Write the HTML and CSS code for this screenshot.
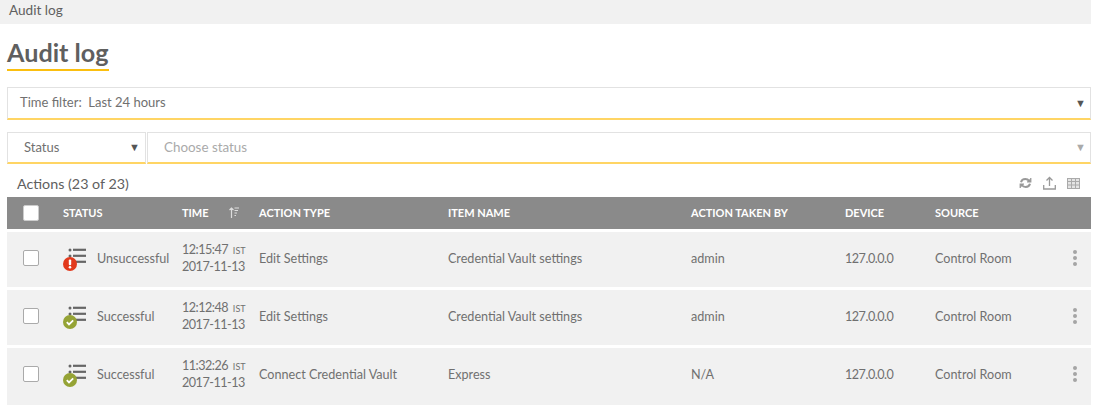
FILE: index.html
```html
<!DOCTYPE html>
<html lang="en">
<head>
    <meta charset="UTF-8">
    <title>Audit log</title>
    <link rel="stylesheet" href="styles.css">
</head>
<body>
    <svg class="defs" width="0" height="0">
        <symbol id="list" viewBox="0 0 18 16">
            <circle cx="2" cy="2" r="1.5" fill="#666"/>
            <circle cx="2" cy="8" r="1.5" fill="#666"/>
            <rect x="5" y="0.7" width="13" height="2.2" fill="#666"/>
            <rect x="5" y="6.7" width="13" height="2.2" fill="#666"/>
            <rect x="5" y="12.7" width="13" height="2.2" fill="#666"/>
        </symbol>
    </svg>

    <div class="crumb">Audit log</div>

    <div class="main">
        <h1 class="title">Audit log</h1>

        <div class="filter time-filter">
            <span>Time filter:&nbsp; Last 24 hours</span>
            <span class="arrow dark">▼</span>
        </div>

        <div class="status-filter">
            <div class="filter status-select">
                <span>Status</span>
                <span class="arrow dark">▼</span>
            </div>
            <div class="filter status-input">
                <span class="placeholder">Choose status</span>
                <span class="arrow">▼</span>
            </div>
        </div>

        <div class="toolbar">
            <span class="count">Actions (23 of 23)</span>
            <div class="tools">
                <svg width="13" height="12" viewBox="0 0 13 12" fill="none" stroke="#999" stroke-width="2">
                    <path d="M2 5.2C2.6 3 4.3 2 6.3 2c1.6 0 3 .7 3.9 2"/>
                    <path d="M11 6.8C10.4 9 8.700 10 6.700 10c-1.600 0-3-.7-3.900-2"/>
                    <path d="M11.800 1v4H8M1.200 11V7H5" stroke-width="1.200" fill="#999"/>
                </svg>
                <svg width="13" height="14" viewBox="0 0 13 14" fill="none" stroke="#999" stroke-width="1.300">
                    <path d="M6.500 10V2M3.500 4.500l3-3 3 3"/>
                    <path d="M.7 9v4h11.600V9"/>
                </svg>
                <svg width="13" height="11" viewBox="0 0 13 11" fill="none" stroke="#aaa" stroke-width="1">
                    <rect x=".5" y=".5" width="12" height="10" fill="#e4e4e4"/>
                    <path d="M.5 3.500h12M.5 7h12M4.500 .5v10M8.500 .5v10"/>
                </svg>
            </div>
        </div>

        <div class="row head">
            <div><span class="check"></span></div>
            <div>Status</div>
            <div class="time-head">
                <span>Time</span>
                <svg width="10" height="11" viewBox="0 0 10 11" fill="none" stroke="#ddd" stroke-width="1.200">
                    <path d="M2.500 11V1M.5 3l2-2 2 2M5.500 1H10M5.500 3.500H9M5.500 6H8M5.500 8.500H7"/>
                </svg>
            </div>
            <div>Action type</div>
            <div>Item name</div>
            <div>Action taken by</div>
            <div>Device</div>
            <div>Source</div>
            <div></div>
        </div>

        <div class="row item">
            <div><span class="check"></span></div>
            <div class="status">
                <span class="status-icon">
                    <svg class="list" width="18" height="16"><use href="#list"/></svg>
                    <svg class="badge" width="14" height="14" viewBox="0 0 14 14">
                        <circle cx="7" cy="7" r="7" fill="#e2391c"/>
                        <rect x="5.800" y="2.500" width="2.400" height="5.800" rx="1" fill="#fff"/>
                        <circle cx="7" cy="10.300" r="1.300" fill="#fff"/>
                    </svg>
                </span>
                <span>Unsuccessful</span>
            </div>
            <div class="time"><span class="digits">12:15:47 <small>IST</small></span><span class="digits">2017-11-13</span></div>
            <div>Edit Settings</div>
            <div>Credential Vault settings</div>
            <div>admin</div>
            <div class="digits">127.0.0.0</div>
            <div>Control Room</div>
            <div class="kebab"><i></i><i></i><i></i></div>
        </div>

        <div class="row item">
            <div><span class="check"></span></div>
            <div class="status">
                <span class="status-icon">
                    <svg class="list" width="18" height="16"><use href="#list"/></svg>
                    <svg class="badge" width="14" height="14" viewBox="0 0 14 14">
                        <circle cx="7" cy="7" r="7" fill="#95a335"/>
                        <path d="M3.800 7.200l2.200 2.200 4.200-4" fill="none" stroke="#fff" stroke-width="1.800"/>
                    </svg>
                </span>
                <span>Successful</span>
            </div>
            <div class="time"><span class="digits">12:12:48 <small>IST</small></span><span class="digits">2017-11-13</span></div>
            <div>Edit Settings</div>
            <div>Credential Vault settings</div>
            <div>admin</div>
            <div class="digits">127.0.0.0</div>
            <div>Control Room</div>
            <div class="kebab"><i></i><i></i><i></i></div>
        </div>

        <div class="row item last">
            <div><span class="check"></span></div>
            <div class="status">
                <span class="status-icon">
                    <svg class="list" width="18" height="16"><use href="#list"/></svg>
                    <svg class="badge" width="14" height="14" viewBox="0 0 14 14">
                        <circle cx="7" cy="7" r="7" fill="#95a335"/>
                        <path d="M3.800 7.200l2.200 2.200 4.200-4" fill="none" stroke="#fff" stroke-width="1.800"/>
                    </svg>
                </span>
                <span>Successful</span>
            </div>
            <div class="time"><span class="digits">11:32:26 <small>IST</small></span><span class="digits">2017-11-13</span></div>
            <div>Connect Credential Vault</div>
            <div>Express</div>
            <div>N/A</div>
            <div class="digits">127.0.0.0</div>
            <div>Control Room</div>
            <div class="kebab"><i></i><i></i><i></i></div>
        </div>
    </div>
</body>
</html>
```

FILE: styles.css
```css
html, body {
    height: 405px;
    overflow: hidden;
}
body {
    margin: 0;
    width: 1091px;
    font-family: Lato, "Open Sans", sans-serif;
    font-size: 13px;
    color: #707070;
    background-color: #fff;
}
.defs {
    display: block;
}
.crumb {
    height: 24px;
    line-height: 21px;
    padding-left: 9px;
    background-color: #f1f1f1;
    color: #606060;
    font-size: 13.6px;
}
.main {
    padding-left: 7px;
}
.title {
    display: inline-block;
    margin: 13px 0 16px;
    padding-bottom: 1px;
    border-bottom: 2px solid #fbbf0f;
    font-size: 25.2px;
    font-weight: 700;
    line-height: 31px;
    color: #5f5f5f;
}
.filter {
    display: flex;
    align-items: center;
    justify-content: space-between;
    box-sizing: border-box;
    padding-bottom: 2px;
    background-color: #fff;
    border: 1px solid #e2e2e2;
    border-bottom: 2px solid #ffd564;
}
.time-filter {
    height: 33px;
    padding-left: 12px;
    padding-right: 4px;
}
.status-filter {
    display: flex;
    gap: 1px;
    margin-top: 12px;
}
.status-select {
    width: 139px;
    height: 32px;
    padding-left: 16px;
    padding-right: 5px;
}
.status-input {
    flex: 1;
    height: 32px;
    padding-left: 16px;
    padding-right: 4px;
}
.placeholder {
    color: #aaa;
    font-size: 13.4px;
}
.arrow {
    font-size: 11px;
    color: #aaa;
}
.arrow.dark {
    color: #555;
}
.toolbar {
    display: flex;
    align-items: center;
    justify-content: space-between;
    height: 33px;
    padding: 5px 11px 0 10px;
    box-sizing: border-box;
}
.count {
    font-size: 14.3px;
    color: #606060;
}
.tools {
    display: flex;
    align-items: center;
    gap: 11px;
}
.row {
    display: grid;
    grid-template-columns: 56px 119px 77px 189px 243px 154px 90px 136px 1fr;
    align-items: center;
}
.head {
    box-sizing: border-box;
    height: 32px;
    padding-bottom: 1px;
    margin-bottom: 3px;
    background-color: #8a8a8a;
    color: #fff;
    font-size: 11px;
    font-weight: 700;
    text-transform: uppercase;
}
.head > div:first-child,
.item > div:first-child {
    padding-left: 16px;
}
.head .check {
    border-color: #ccc;
}
.time-head {
    display: flex;
    align-items: center;
    gap: 20px;
}
.check {
    display: block;
    box-sizing: border-box;
    width: 16px;
    height: 16px;
    background-color: #fff;
    border: 1px solid #aaa;
    border-radius: 2px;
}
.item {
    box-sizing: border-box;
    height: 55px;
    padding-bottom: 3px;
    margin-bottom: 3px;
    background-color: #f1f1f1;
    font-size: 12.6px;
}
.item.last {
    height: 60px;
    padding-bottom: 8px;
}
.digits {
    letter-spacing: -0.5px;
}
.status {
    display: flex;
    align-items: center;
    gap: 10px;
}
.status-icon {
    position: relative;
    display: block;
    width: 24px;
    height: 24px;
}
.status-icon .list {
    position: absolute;
    left: 5px;
    top: 2px;
}
.status-icon .badge {
    position: absolute;
    left: 0;
    bottom: -1px;
}
.time {
    display: flex;
    flex-direction: column;
    line-height: 16px;
}
.time small {
    font-size: 9px;
    letter-spacing: 0;
    margin-left: 2px;
}
.kebab {
    display: flex;
    flex-direction: column;
    align-items: center;
    gap: 2px;
    width: 8px;
}
.kebab i {
    width: 4px;
    height: 4px;
    border-radius: 50%;
    background-color: #a5a5a5;
}
```
